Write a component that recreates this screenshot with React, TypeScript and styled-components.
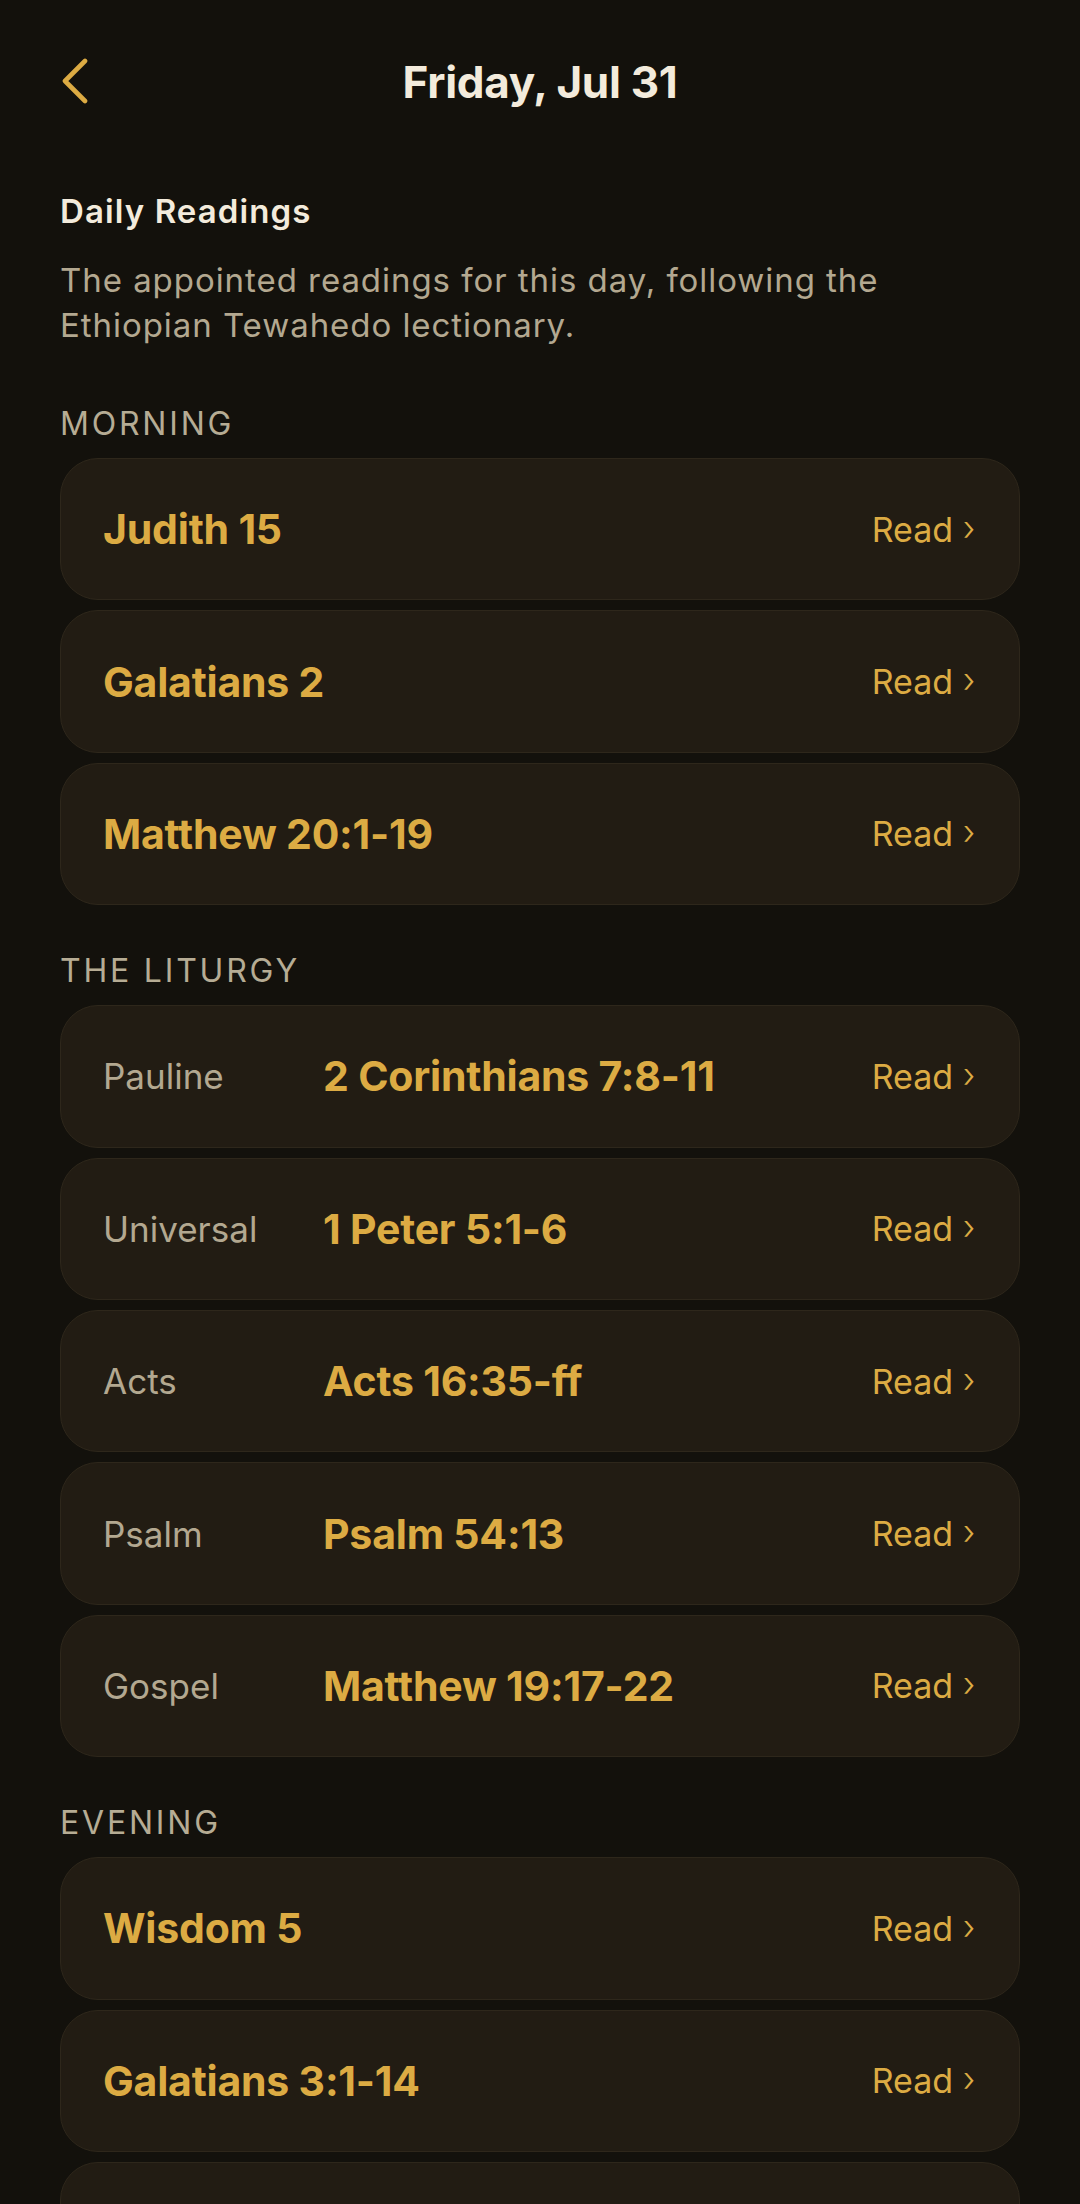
import React from "react";
import styled, { createGlobalStyle } from "styled-components";

const GlobalStyle = createGlobalStyle`
  html, body {
    margin: 0;
    padding: 0;
    background: #13110c;
  }
  body {
    font-family: Inter, "Noto Sans", "Liberation Sans", sans-serif;
    -webkit-font-smoothing: antialiased;
  }
`;

type Reading = { label?: string; ref: string };

const sections: { title: string; items: Reading[] }[] = [
  {
    title: "Morning",
    items: [{ ref: "Judith 15" }, { ref: "Galatians 2" }, { ref: "Matthew 20:1-19" }],
  },
  {
    title: "The Liturgy",
    items: [
      { label: "Pauline", ref: "2 Corinthians 7:8-11" },
      { label: "Universal", ref: "1 Peter 5:1-6" },
      { label: "Acts", ref: "Acts 16:35-ff" },
      { label: "Psalm", ref: "Psalm 54:13" },
      { label: "Gospel", ref: "Matthew 19:17-22" },
    ],
  },
  {
    title: "Evening",
    items: [{ ref: "Wisdom 5" }, { ref: "Galatians 3:1-14" }, { ref: "Matthew 20:20-28" }],
  },
];

const App = () => {
  return (
    <Page>
      <GlobalStyle />
      <Header>
        <BackButton aria-label="Back">
          <svg width="30" height="46" viewBox="0 0 30 46" fill="none">
            <path
              d="M25 3 L5 23 L25 43"
              stroke="#dcab43"
              strokeWidth="4.6"
              strokeLinecap="round"
              strokeLinejoin="round"
            />
          </svg>
        </BackButton>
        <Title>Friday, Jul 31</Title>
      </Header>

      <Intro>
        <IntroTitle>Daily Readings</IntroTitle>
        <IntroText>
          The appointed readings for this day, following the Ethiopian Tewahedo lectionary.
        </IntroText>
      </Intro>

      {sections.map((section) => (
        <Section key={section.title}>
          <SectionLabel>{section.title}</SectionLabel>
          <CardList>
            {section.items.map((item) => (
              <Card key={item.ref}>
                {item.label && <RowLabel>{item.label}</RowLabel>}
                <RefText>{item.ref}</RefText>
                <ReadLink>
                  Read <Chevron>›</Chevron>
                </ReadLink>
              </Card>
            ))}
          </CardList>
        </Section>
      ))}
    </Page>
  );
};

const Page = styled.div`
  min-height: 100vh;
  background: #13110c;
  padding: 0 60px 60px;
  box-sizing: border-box;
`;

const Header = styled.header`
  position: relative;
  display: flex;
  align-items: center;
  justify-content: center;
  height: 104px;
  padding-top: 30px;
`;

const BackButton = styled.button`
  position: absolute;
  left: 0;
  top: 58px;
  background: none;
  border: none;
  padding: 0;
  display: flex;
`;

const Title = styled.h1`
  margin: 0;
  font-size: 44px;
  font-weight: 700;
  color: #f3ebdc;
  letter-spacing: -0.3px;
`;

const Intro = styled.div`
  margin-top: 57px;
`;

const IntroTitle = styled.h2`
  margin: 0;
  font-size: 33px;
  font-weight: 600;
  line-height: 40px;
  letter-spacing: 1.1px;
  color: #f3ebdc;
`;

const IntroText = styled.p`
  margin: 27px 0 0;
  font-size: 33px;
  line-height: 45px;
  font-weight: 400;
  letter-spacing: 0.95px;
  color: #b3a890;
  max-width: 900px;
`;

const Section = styled.section`
  margin-top: 46px;
  &:first-of-type {
    margin-top: 56px;
  }
`;

const SectionLabel = styled.div`
  font-size: 32px;
  font-weight: 400;
  text-transform: uppercase;
  letter-spacing: 2.8px;
  line-height: 40px;
  color: #b6ac94;
  margin-bottom: 14px;
`;

const CardList = styled.div`
  display: flex;
  flex-direction: column;
  gap: 10px;
`;

const Card = styled.div`
  display: flex;
  align-items: center;
  height: 142.4px;
  box-sizing: border-box;
  padding: 0 44px 0 42px;
  background: #221c13;
  border: 1.5px solid #2e271b;
  border-radius: 38px;
`;

const RowLabel = styled.span`
  width: 220px;
  flex-shrink: 0;
  font-size: 35px;
  font-weight: 400;
  color: #b3a890;
`;

const RefText = styled.span`
  flex: 1;
  font-size: 41px;
  font-weight: 700;
  color: #dcab43;
  letter-spacing: -0.2px;
`;

const ReadLink = styled.span`
  display: flex;
  align-items: center;
  font-size: 34px;
  font-weight: 400;
  color: #dcab43;
  white-space: pre;
`;

const Chevron = styled.span`
  font-size: 34px;
  font-weight: 300;
  line-height: 1;
  margin-top: -3px;
`;

export default App;
